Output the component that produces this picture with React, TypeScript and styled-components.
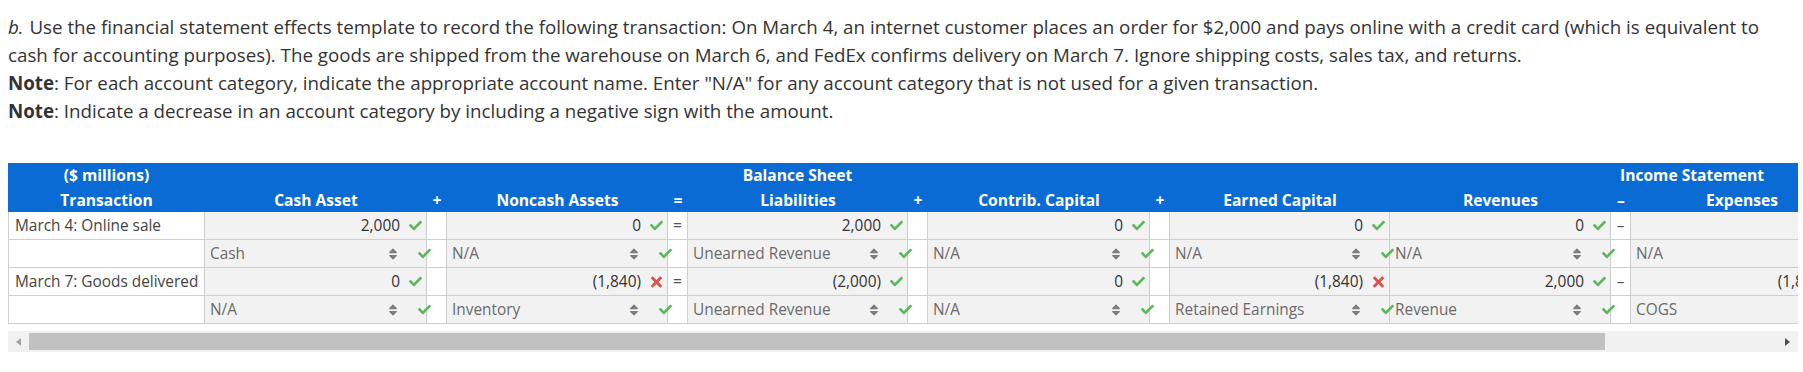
import React from "react";
import styled, { createGlobalStyle } from "styled-components";
import { FaCheck, FaTimes, FaSort } from "react-icons/fa";

const GlobalStyle = createGlobalStyle`
  body {
    margin: 0;
    background: #fff;
    font-family: "Open Sans", "Noto Sans", "Liberation Sans", sans-serif;
  }
`;

type AmountCol = { kind: "amt"; title: string };
type OpCol = { kind: "op"; sign: string; bodySign: string };
type Col = AmountCol | OpCol;

const columns: Col[] = [
  { kind: "amt", title: "Cash Asset" },
  { kind: "op", sign: "+", bodySign: "" },
  { kind: "amt", title: "Noncash Assets" },
  { kind: "op", sign: "=", bodySign: "=" },
  { kind: "amt", title: "Liabilities" },
  { kind: "op", sign: "+", bodySign: "" },
  { kind: "amt", title: "Contrib. Capital" },
  { kind: "op", sign: "+", bodySign: "" },
  { kind: "amt", title: "Earned Capital" },
  { kind: "amt", title: "Revenues" },
  { kind: "op", sign: "–", bodySign: "–" },
  { kind: "amt", title: "Expenses" },
  { kind: "op", sign: "=", bodySign: "=" },
  { kind: "amt", title: "Net Income" },
];

const colWidths = [197, 222, 20, 221, 20, 220, 20, 222, 20, 220, 221, 20, 222, 20, 121];

type Amount = { value: string; ok: boolean };

type Transaction = {
  label: string;
  amounts: Amount[];
  accounts: string[];
};

// 8 amount columns: cash, noncash, liab, contrib, earned, rev, exp, ni
const transactions: Transaction[] = [
  {
    label: "March 4: Online sale",
    amounts: [
      { value: "2,000", ok: true },
      { value: "0", ok: true },
      { value: "2,000", ok: true },
      { value: "0", ok: true },
      { value: "0", ok: true },
      { value: "0", ok: true },
      { value: "0", ok: true },
      { value: "0", ok: true },
    ],
    accounts: ["Cash", "N/A", "Unearned Revenue", "N/A", "N/A", "N/A", "N/A", ""],
  },
  {
    label: "March 7: Goods delivered",
    amounts: [
      { value: "0", ok: true },
      { value: "(1,840)", ok: false },
      { value: "(2,000)", ok: true },
      { value: "0", ok: true },
      { value: "(1,840)", ok: false },
      { value: "2,000", ok: true },
      { value: "(1,840)", ok: true },
      { value: "160", ok: true },
    ],
    accounts: ["N/A", "Inventory", "Unearned Revenue", "N/A", "Retained Earnings", "Revenue", "COGS", ""],
  },
];

const Mark = ({ ok }: { ok: boolean }) =>
  ok ? (
    <CheckMark>
      <FaCheck size={13} />
    </CheckMark>
  ) : (
    <CrossMark>
      <FaTimes size={16} />
    </CrossMark>
  );

export default function App() {
  const renderAmountRow = (t: Transaction) => {
    let i = 0;
    return (
      <>
        <LabelCell>{t.label}</LabelCell>
        {columns.map((c, idx) => {
          if (c.kind === "op") return <OpCell key={idx}>{c.bodySign}</OpCell>;
          const a = t.amounts[i++];
          return (
            <InputCell key={idx}>
              <span>{a.value}</span>
              <Mark ok={a.ok} />
            </InputCell>
          );
        })}
      </>
    );
  };

  const renderAccountRow = (t: Transaction) => {
    let i = 0;
    return (
      <>
        <LabelCell />
        {columns.map((c, idx) => {
          if (c.kind === "op") return <OpCell key={idx} />;
          const name = t.accounts[i++];
          if (!name) return <InputCell key={idx} />;
          return (
            <SelectCell key={idx}>
              <SelectText>{name}</SelectText>
              <SortIcon>
                <FaSort size={14} />
              </SortIcon>
              <SelectCheck>
                <FaCheck size={13} />
              </SelectCheck>
            </SelectCell>
          );
        })}
      </>
    );
  };

  return (
    <Page>
      <GlobalStyle />
      <Prompt>
        <Para>
          <Part>b.</Part> Use the financial statement effects template to record the following transaction: On March 4,
          an internet customer places an order for $2,000 and pays online with a credit card (which is equivalent to
          cash for accounting purposes). The goods are shipped from the warehouse on March 6, and FedEx confirms
          delivery on March 7. Ignore shipping costs, sales tax, and returns.
        </Para>
        <Para>
          <strong>Note</strong>: For each account category, indicate the appropriate account name. Enter "N/A" for any
          account category that is not used for a given transaction.
        </Para>
        <Para>
          <strong>Note</strong>: Indicate a decrease in an account category by including a negative sign with the
          amount.
        </Para>
      </Prompt>

      <Scroller>
        <Grid>
          <HeadCell $row={1}>($ millions)</HeadCell>
          <HeadCell $row={1} $span={9}>
            Balance Sheet
          </HeadCell>
          <HeadCell $row={1} $span={5}>
            Income Statement
          </HeadCell>

          <HeadCell $row={2}>Transaction</HeadCell>
          {columns.map((c, idx) => (
            <HeadCell key={idx} $row={2}>
              {c.kind === "amt" ? c.title : c.sign}
            </HeadCell>
          ))}

          {transactions.map((t, idx) => (
            <React.Fragment key={idx}>
              {renderAmountRow(t)}
              {renderAccountRow(t)}
            </React.Fragment>
          ))}
        </Grid>
      </Scroller>

      <ScrollBar>
        <ScrollButton>
          <svg width="5" height="8" viewBox="0 0 5 8">
            <polygon points="5,0 5,8 0,4" fill="#a3a3a3" />
          </svg>
        </ScrollButton>
        <ScrollThumb />
        <ScrollButton $end>
          <svg width="5" height="8" viewBox="0 0 5 8">
            <polygon points="0,0 0,8 5,4" fill="#505050" />
          </svg>
        </ScrollButton>
      </ScrollBar>
    </Page>
  );
}

const Page = styled.div`
  padding: 13px 5px 16px 8px;
`;

const Prompt = styled.div`
  margin-bottom: 38px;
  color: #333;
  font-size: 18.75px;
  line-height: 28px;
`;

const Para = styled.p`
  margin: 0;

  strong {
    font-weight: 700;
  }
`;

const Part = styled.span`
  font-style: italic;
  padding-right: 1px;
`;

const Scroller = styled.div`
  width: 1790px;
  overflow: hidden;
`;

const Grid = styled.div`
  display: grid;
  grid-template-columns: ${colWidths.map((w) => `${w}px`).join(" ")};
  grid-template-rows: 24px 25px repeat(4, 28px);
  width: max-content;
  font-size: 15.4px;
`;

const HeadCell = styled.div<{ $row: 1 | 2; $span?: number }>`
  grid-column: span ${({ $span }) => $span ?? 1};
  box-sizing: border-box;
  padding-top: ${({ $row }) => ($row === 1 ? "0" : "1px")};
  background: #0b6bd5;
  color: #fff;
  font-weight: 700;
  font-size: 15.6px;
  text-align: center;
  white-space: nowrap;
  line-height: 24px;
`;

const BodyCell = styled.div`
  box-sizing: border-box;
  border-right: 1px solid #cfcfcf;
  border-bottom: 1px solid #cfcfcf;
  line-height: 27px;
  white-space: nowrap;
`;

const LabelCell = styled(BodyCell)`
  border-left: 1px solid #cfcfcf;
  padding-left: 6px;
  color: #444;
  background: #fff;
`;

const OpCell = styled(BodyCell)`
  background: #fff;
  color: #555;
  text-align: center;
`;

const InputCell = styled(BodyCell)`
  display: flex;
  align-items: center;
  justify-content: flex-end;
  gap: 9px;
  padding-right: 4px;
  background: #f2f2f2;
  color: #333;
`;

const CheckMark = styled.span`
  display: inline-flex;
  justify-content: center;
  width: 13px;
  color: #5cb85c;
`;

const CrossMark = styled(CheckMark)`
  color: #d9534f;
`;

const SelectCell = styled(BodyCell)`
  display: flex;
  align-items: center;
  padding-left: 5px;
  background: #f2f2f2;
  color: #6a6a6a;
`;

const SelectText = styled.span`
  flex: 1;
`;

const SortIcon = styled.span`
  display: inline-flex;
  margin-right: 18px;
  color: #7d7d7d;
`;

const SelectCheck = styled.span`
  position: relative;
  z-index: 1;
  display: inline-flex;
  margin-right: -5px;
  color: #5cb85c;
`;

const ScrollBar = styled.div`
  display: flex;
  width: 1790px;
  height: 21px;
  margin-top: 7px;
  background: #f1f1f1;
`;

const ScrollButton = styled.div<{ $end?: boolean }>`
  display: flex;
  align-items: center;
  justify-content: center;
  width: 21px;
  margin-left: ${({ $end }) => ($end ? "auto" : "0")};
`;

const ScrollThumb = styled.div`
  width: 1576px;
  margin: 2px 0;
  background: #c1c1c1;
`;
